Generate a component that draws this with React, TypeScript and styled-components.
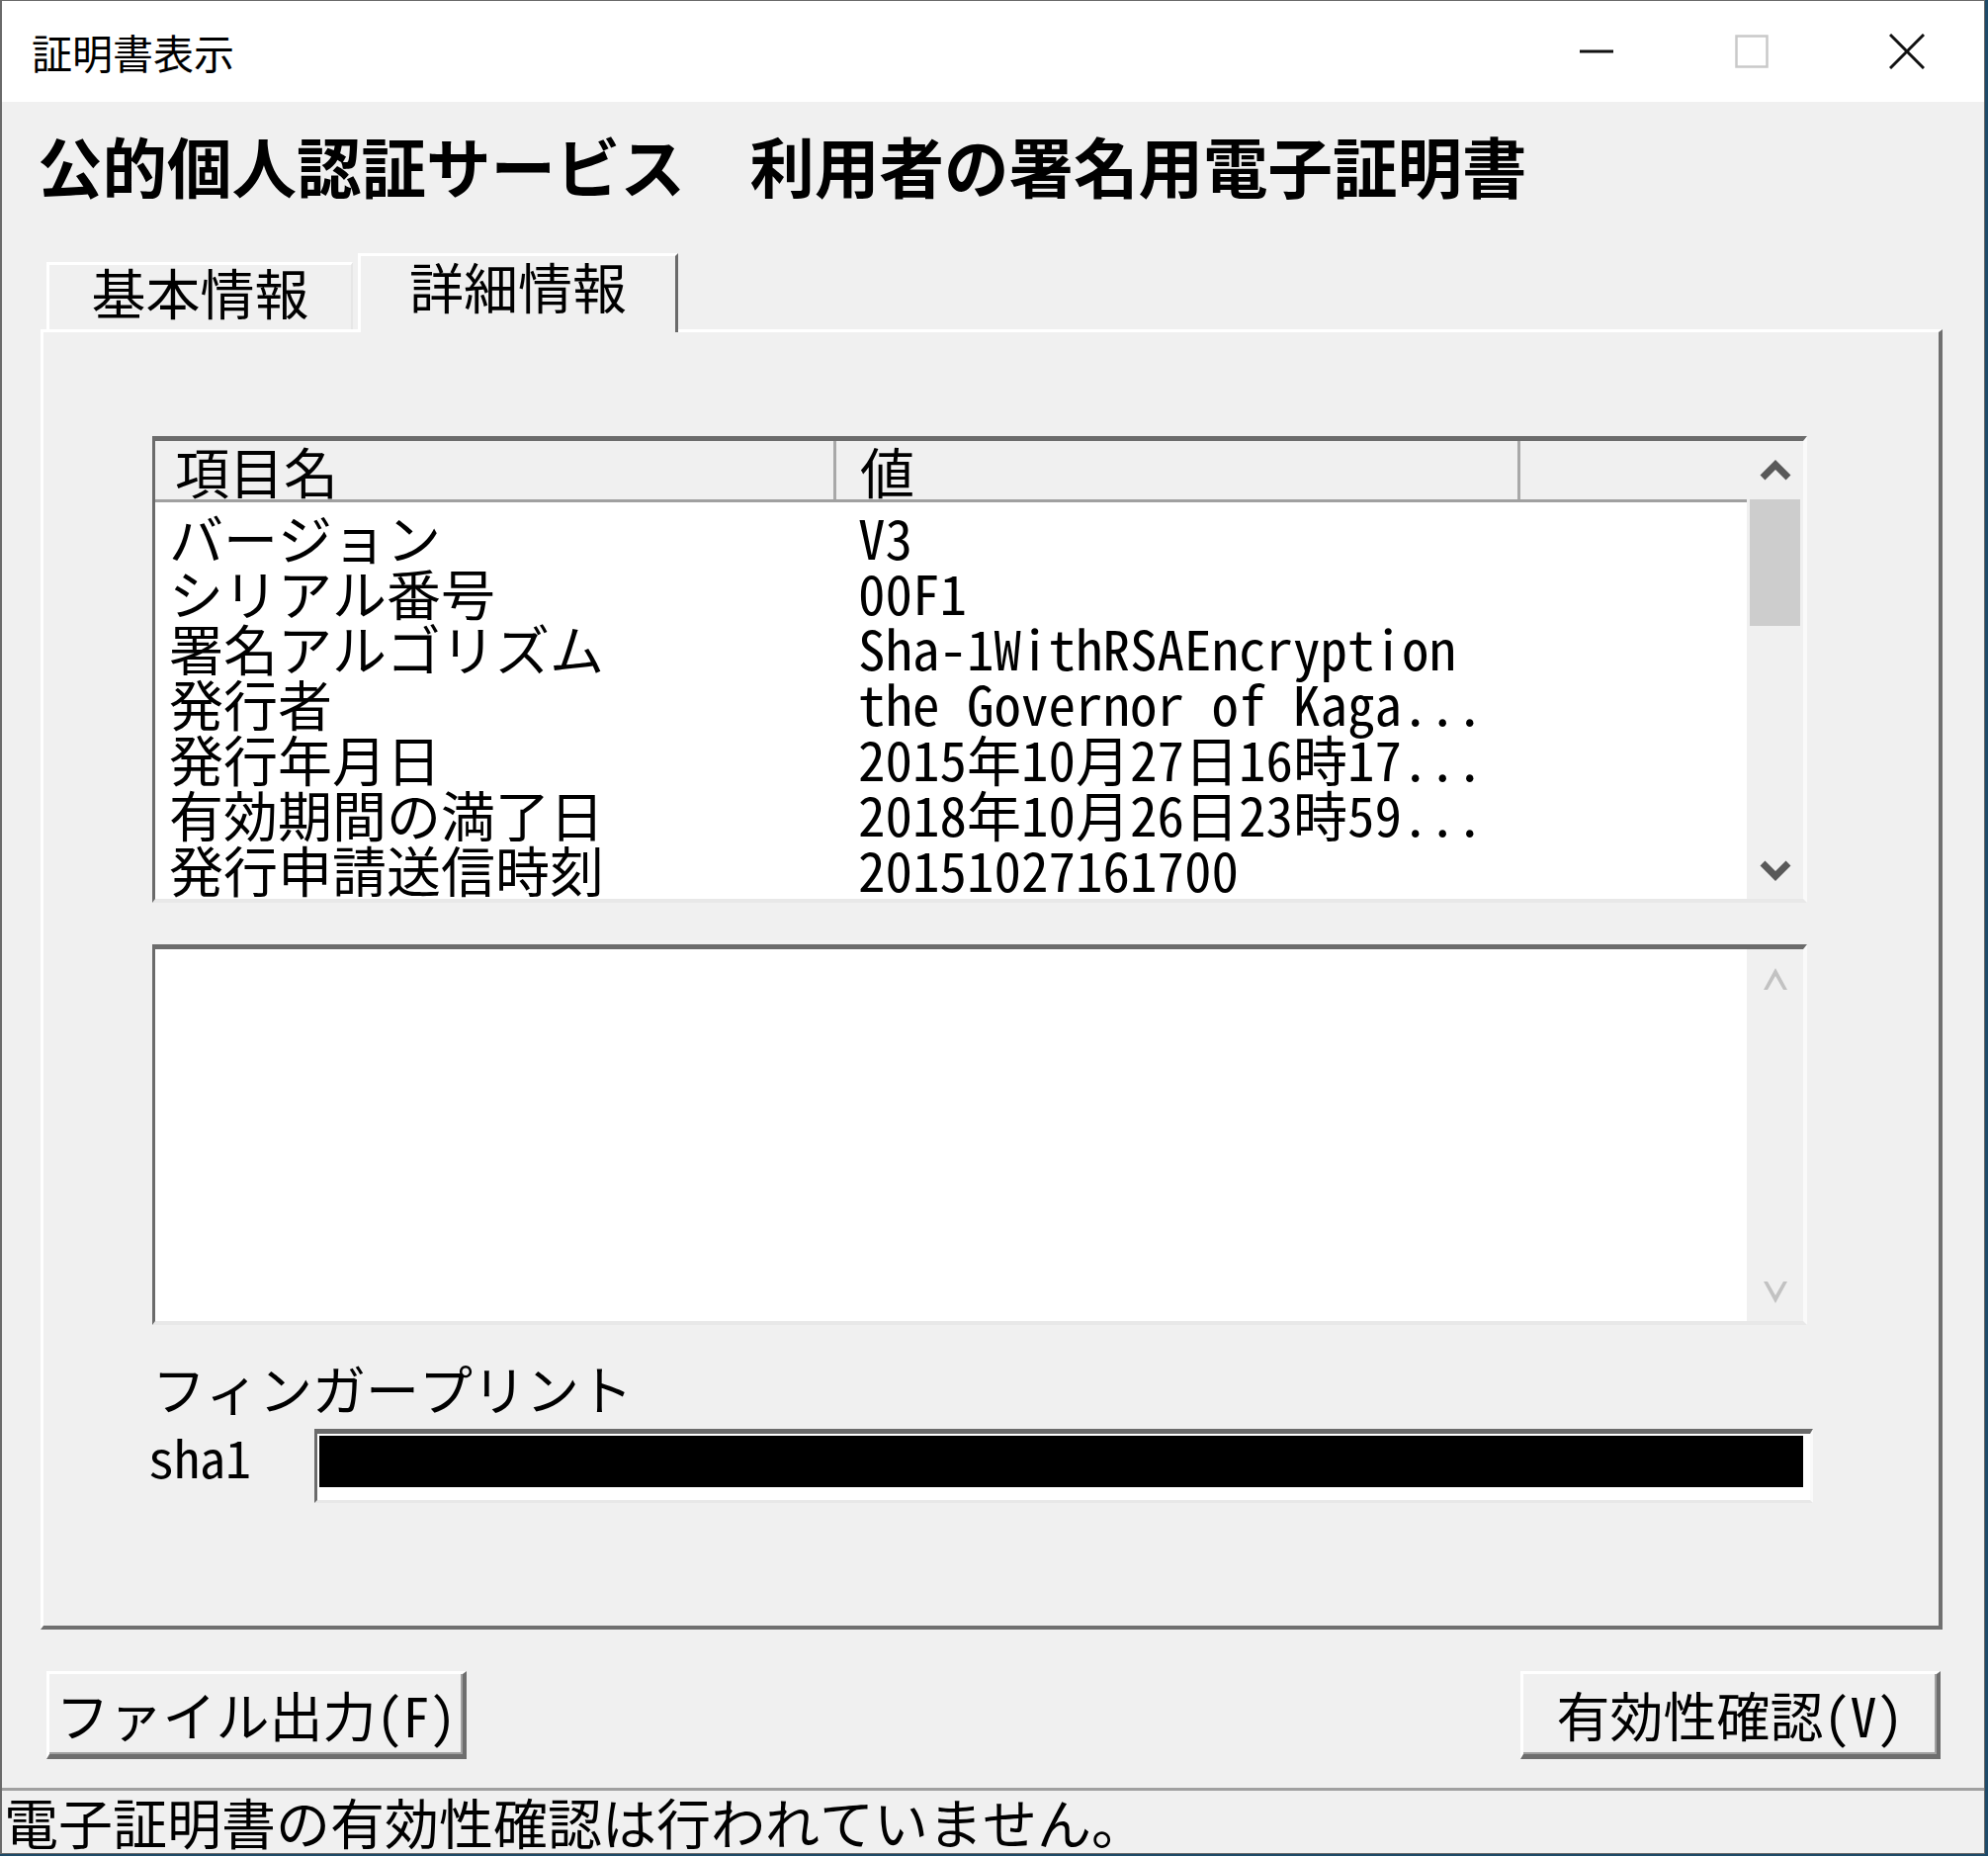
import React from 'react';
import styled, { createGlobalStyle } from 'styled-components';

const UI_FONT = '"Noto Sans CJK JP", "Liberation Sans", sans-serif';
const MONO_FONT = '"Noto Sans Mono CJK JP", "Liberation Mono", "Noto Sans CJK JP", monospace';

const fields: [string, string][] = [
  ['バージョン', 'V3'],
  ['シリアル番号', '00F1'],
  ['署名アルゴリズム', 'Sha-1WithRSAEncryption'],
  ['発行者', 'the Governor of Kaga...'],
  ['発行年月日', '2015年10月27日16時17...'],
  ['有効期間の満了日', '2018年10月26日23時59...'],
  ['発行申請送信時刻', '20151027161700'],
];

const Chevron = ({ up, disabled }: { up?: boolean; disabled?: boolean }) =>
  disabled ? (
    <svg width="26" height="24" viewBox="0 0 26 24">
      <path
        d={up ? 'M13 1 L25 23 L21 23 L13 9 L5 23 L1 23 Z' : 'M13 23 L25 1 L21 1 L13 15 L5 1 L1 1 Z'}
        fill="#c2c2c2"
      />
    </svg>
  ) : (
    <svg width="32" height="22" viewBox="0 0 32 22">
      <polyline
        points={up ? '3,18 16,5 29,18' : '3,4 16,17 29,4'}
        fill="none"
        stroke="#595959"
        strokeWidth="7"
      />
    </svg>
  );

const ScrollBar = ({ disabled }: { disabled?: boolean }) => (
  <Scroll>
    <ScrollButton>
      <Chevron up disabled={disabled} />
    </ScrollButton>
    {!disabled && <Thumb />}
    <Track />
    <ScrollButton>
      <Chevron disabled={disabled} />
    </ScrollButton>
  </Scroll>
);

export default function App() {
  return (
    <>
      <GlobalStyle />
      <Window>
        <TitleBar>
          <TitleText>証明書表示</TitleText>
          <Controls>
            <Control>
              <svg width="34" height="34" viewBox="0 0 34 34">
                <path d="M0 17 H34" stroke="#111" strokeWidth="3" />
              </svg>
            </Control>
            <Control>
              <svg width="34" height="34" viewBox="0 0 34 34">
                <rect x="1.5" y="1.5" width="31" height="31" fill="none" stroke="#c9c9c9" strokeWidth="2.5" />
              </svg>
            </Control>
            <Control>
              <svg width="36" height="36" viewBox="0 0 36 36">
                <path d="M1 1 L35 35 M35 1 L1 35" stroke="#111" strokeWidth="3" />
              </svg>
            </Control>
          </Controls>
        </TitleBar>

        <Heading>公的個人認証サービス　利用者の署名用電子証明書</Heading>

        <TabStrip>
          <Tab>基本情報</Tab>
          <Tab $active>詳細情報</Tab>
        </TabStrip>

        <Panel>
          <ListBox $height={472}>
            <ListMain>
              <Header>
                <HeaderCell $width={689} $pad={20}>項目名</HeaderCell>
                <HeaderCell $width={692} $pad={24}>値</HeaderCell>
                <HeaderCell $last />
              </Header>
              <Rows>
                {fields.map(([name, value]) => (
                  <Row key={name}>
                    <Cell $width={689} $pad={14}>{name}</Cell>
                    <Cell $pad={22}>{value}</Cell>
                  </Row>
                ))}
              </Rows>
            </ListMain>
            <ScrollBar />
          </ListBox>

          <ListBox $height={385} $gap={42}>
            <ListMain />
            <ScrollBar disabled />
          </ListBox>

          <Label>フィンガープリント</Label>
          <ShaRow>
            <ShaLabel>sha1</ShaLabel>
            <ShaField>
              <Redacted />
            </ShaField>
          </ShaRow>
        </Panel>

        <ButtonRow>
          <Button>ファイル出力(F)</Button>
          <Button>有効性確認(V)</Button>
        </ButtonRow>

        <StatusBar>電子証明書の有効性確認は行われていません。</StatusBar>
      </Window>
    </>
  );
}

const GlobalStyle = createGlobalStyle`
  html, body {
    margin: 0;
    padding: 0;
  }
  body {
    width: 2011px;
    height: 1877px;
    overflow: hidden;
    background: #1e4a68;
    font-family: ${UI_FONT};
    color: #000;
  }
`;

const Window = styled.div`
  box-sizing: border-box;
  width: 2008px;
  height: 1875px;
  display: flex;
  flex-direction: column;
  background: #f0f0f0;
  border: 1px solid #6a6a6a;
  border-left-width: 2px;
`;

const TitleBar = styled.div`
  display: flex;
  align-items: center;
  height: 102px;
  flex-shrink: 0;
  background: #fff;
`;

const TitleText = styled.div`
  padding-left: 30px;
  font-size: 41px;
  line-height: 41px;
`;

const Controls = styled.div`
  display: flex;
  height: 100%;
  margin-left: auto;
`;

const Control = styled.div`
  display: flex;
  align-items: center;
  justify-content: center;
  width: 157px;
  height: 100%;
`;

const Heading = styled.h1`
  margin: 31px 0 0 36px;
  font-size: 65.5px;
  line-height: 66px;
  font-weight: 700;
  white-space: nowrap;
`;

const TabStrip = styled.div`
  display: flex;
  align-items: flex-end;
  gap: 5px;
  margin: 56px 0 0 45px;
`;

const Tab = styled.div<{ $active?: boolean }>`
  box-sizing: border-box;
  display: flex;
  align-items: center;
  justify-content: center;
  width: ${p => (p.$active ? 324 : 310)}px;
  height: ${p => (p.$active ? 80 : 68)}px;
  margin-bottom: ${p => (p.$active ? -3 : 0)}px;
  padding-bottom: ${p => (p.$active ? 19 : 13)}px;
  position: relative;
  z-index: ${p => (p.$active ? 1 : 0)};
  background: #f0f0f0;
  border-top: 3px solid #fff;
  border-left: 3px solid #fff;
  border-right: ${p => (p.$active ? '3px solid #6a6a6a' : '2px solid #e6e6e6')};
  font-size: 55px;
  line-height: 55px;
`;

const Panel = styled.div`
  box-sizing: border-box;
  display: flex;
  flex-direction: column;
  width: 1924px;
  height: 1315px;
  margin-left: 39px;
  padding: 105px 133px 0 110px;
  border-top: 3px solid #fff;
  border-left: 3px solid #fff;
  border-right: 4px solid #707070;
  border-bottom: 4px solid #707070;
`;

const ListBox = styled.div<{ $height: number; $gap?: number }>`
  box-sizing: border-box;
  display: flex;
  height: ${p => p.$height}px;
  margin-top: ${p => p.$gap ?? 0}px;
  background: #fff;
  border-top: 5px solid #6b6b6b;
  border-left: 3px solid #6b6b6b;
  border-right: 4px solid #fafafa;
  border-bottom: 4px solid #e8e8e8;
`;

const ListMain = styled.div`
  flex: 1;
  min-width: 0;
  display: flex;
  flex-direction: column;
`;

const Header = styled.div`
  box-sizing: border-box;
  display: flex;
  height: 62px;
  flex-shrink: 0;
  background: #f0f0f0;
  border-bottom: 3px solid #a0a0a0;
`;

const HeaderCell = styled.div<{ $width?: number; $pad?: number; $last?: boolean }>`
  box-sizing: border-box;
  ${p => (p.$width ? `width: ${p.$width}px;` : 'flex: 1;')}
  padding-left: ${p => p.$pad ?? 0}px;
  border-right: ${p => (p.$last ? 'none' : '3px solid #a8a8a8')};
  font-family: ${MONO_FONT};
  font-size: 55px;
  line-height: 59px;
  white-space: nowrap;
`;

const Rows = styled.div`
  padding-top: 6px;
`;

const Row = styled.div`
  display: flex;
  height: 56px;
  font-family: ${MONO_FONT};
  font-size: 55px;
  line-height: 56px;
  white-space: nowrap;
`;

const Cell = styled.div<{ $width?: number; $pad?: number }>`
  box-sizing: border-box;
  ${p => (p.$width ? `width: ${p.$width}px;` : 'flex: 1;')}
  padding-left: ${p => p.$pad ?? 0}px;
`;

const Scroll = styled.div`
  display: flex;
  flex-direction: column;
  width: 57px;
  flex-shrink: 0;
  background: #f0f0f0;
`;

const ScrollButton = styled.div`
  display: flex;
  align-items: center;
  justify-content: center;
  height: 59px;
  flex-shrink: 0;
`;

const Thumb = styled.div`
  height: 128px;
  margin: 0 3px;
  background: #cdcdcd;
`;

const Track = styled.div`
  flex: 1;
`;

const Label = styled.div`
  margin-top: 37px;
  font-family: ${MONO_FONT};
  font-size: 54px;
  line-height: 54px;
  white-space: nowrap;
`;

const ShaRow = styled.div`
  display: flex;
  align-items: flex-start;
  margin-top: 14px;
  width: 1680px;
`;

const ShaLabel = styled.div`
  width: 168px;
  margin-left: -4px;
  padding-top: 2px;
  font-family: ${MONO_FONT};
  font-size: 52px;
  line-height: 52px;
`;

const ShaField = styled.div`
  box-sizing: border-box;
  width: 1516px;
  height: 75px;
  padding: 2px 7px 13px 2px;
  background: #fff;
  border-top: 5px solid #6b6b6b;
  border-left: 3px solid #6b6b6b;
  border-right: 3px solid #fafafa;
  border-bottom: 3px solid #e8e8e8;
`;

const Redacted = styled.div`
  height: 100%;
  background: #000;
`;

const ButtonRow = styled.div`
  display: flex;
  justify-content: space-between;
  margin-top: 42px;
  padding: 0 44px 0 45px;
`;

const Button = styled.div`
  box-sizing: border-box;
  display: flex;
  align-items: center;
  justify-content: center;
  width: 425px;
  height: 89px;
  background: #f0f0f0;
  border-top: 3px solid #fff;
  border-left: 3px solid #fff;
  border-right: 4px solid #6e6e6e;
  border-bottom: 5px solid #6e6e6e;
  box-shadow: inset -2px -2px 0 #a0a0a0;
  font-family: ${MONO_FONT};
  font-size: 54px;
  line-height: 54px;
  white-space: nowrap;
`;

const StatusBar = styled.div`
  flex: 1;
  margin-top: 29px;
  padding: 3px 0 0 2px;
  border-top: 3px solid #a0a0a0;
  font-family: ${MONO_FONT};
  font-size: 55px;
  line-height: 54px;
  white-space: nowrap;
`;
